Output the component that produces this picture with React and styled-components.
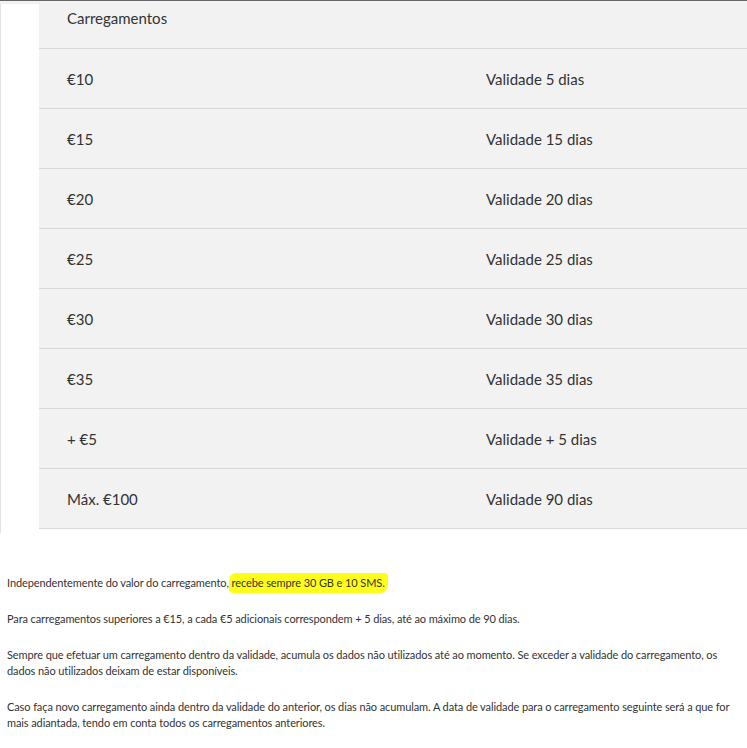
import React from 'react';
import styled, { createGlobalStyle } from 'styled-components';

const GlobalStyle = createGlobalStyle`
  body {
    margin: 0;
    background: #ffffff;
    font-family: Lato, "Open Sans", sans-serif;
    color: #333333;
  }
`;

const rows = [
  ['€10', 'Validade 5 dias'],
  ['€15', 'Validade 15 dias'],
  ['€20', 'Validade 20 dias'],
  ['€25', 'Validade 25 dias'],
  ['€30', 'Validade 30 dias'],
  ['€35', 'Validade 35 dias'],
  ['+ €5', 'Validade + 5 dias'],
  ['Máx. €100', 'Validade 90 dias'],
];

export default function App() {
  return (
    <Page>
      <GlobalStyle />
      <TopStrip />
      <TableArea>
        <Gutter />
        <Table>
          <HeaderRow>
            <Cell>Carregamentos</Cell>
          </HeaderRow>
          {rows.map(([price, validity]) => (
            <Row key={price}>
              <Cell>{price}</Cell>
              <Cell>{validity}</Cell>
            </Row>
          ))}
        </Table>
      </TableArea>
      <Notes>
        <Note>
          Independentemente do valor do carregamento,<Highlight> recebe sempre 30 GB e 10 SMS.</Highlight>
        </Note>
        <Note>
          Para carregamentos superiores a €15, a cada €5 adicionais correspondem + 5 dias, até ao máximo de 90 dias.
        </Note>
        <Note>
          Sempre que efetuar um carregamento dentro da validade, acumula os dados não utilizados até ao momento. Se exceder a validade do carregamento, os dados não utilizados deixam de estar disponíveis.
        </Note>
        <Note>
          Caso faça novo carregamento ainda dentro da validade do anterior, os dias não acumulam. A data de validade para o carregamento seguinte será a que for mais adiantada, tendo em conta todos os carregamentos anteriores.
        </Note>
      </Notes>
    </Page>
  );
}

const Page = styled.div`
  width: 747px;
  min-height: 748px;
  border-top: 1px solid #666666;
`;

const TopStrip = styled.div`
  height: 3px;
  background: #f2f2f2;
`;

const TableArea = styled.div`
  display: flex;
  height: 529px;
`;

const Gutter = styled.div`
  width: 38px;
  border-left: 1px solid #e2e2e2;
  background: #ffffff;
`;

const Table = styled.div`
  flex: 1;
  background: #f2f2f2;
  align-self: flex-start;
`;

const HeaderRow = styled.div`
  height: 45px;
  padding: 3px 0 0 28px;
  box-sizing: border-box;
  font-size: 15px;
  line-height: 22px;
  border-bottom: 1px solid #d9d9d9;
`;

const Row = styled.div`
  display: grid;
  grid-template-columns: 419px 1fr;
  align-items: center;
  height: 60px;
  padding-left: 28px;
  box-sizing: border-box;
  font-size: 15px;
  border-bottom: 1px solid #d9d9d9;
`;

const Cell = styled.div`
  white-space: nowrap;
`;

const Notes = styled.div`
  padding: 42px 7px 0 7px;
`;

const Note = styled.p`
  margin: 0 0 20px 0;
  font-size: 11px;
  line-height: 16px;
  letter-spacing: -0.1px;
`;

const Highlight = styled.span`
  background: #ffff1a;
  border-radius: 7px 3px 8px 4px;
  padding: 3px 3px 4px 0;
`;
